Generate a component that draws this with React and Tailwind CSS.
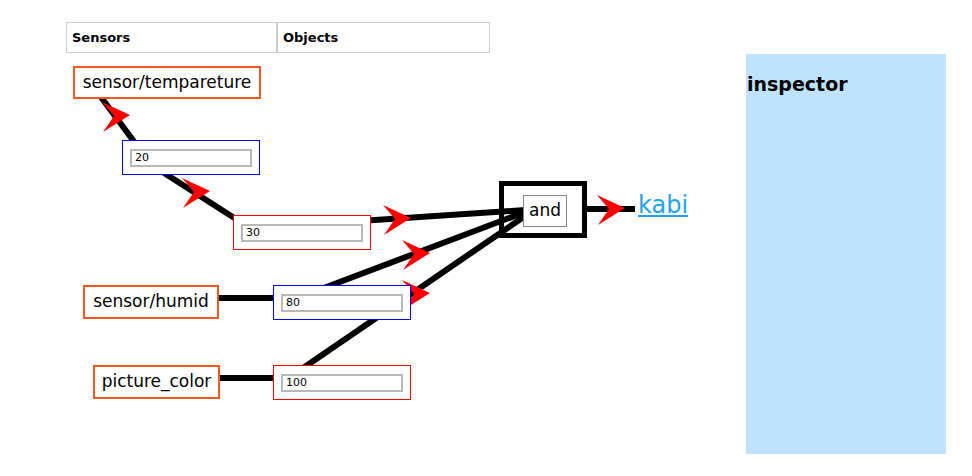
import React from 'react';

const FONT = { fontFamily: '"DejaVu Sans", Verdana, sans-serif' };

// diagram pieces, page coords (canvas starts at y=53)
const lines = [
  [95, 89, 141, 151],
  [150, 164, 250, 228],
  [300, 225, 525, 210],
  [300, 297, 525, 212],
  [290, 377, 525, 216],
  [219, 298, 273, 298],
  [220, 378, 273, 378],
  [587, 209, 635, 209],
];

const arrows = [
  [102, 102],
  [182, 178],
  [383, 205],
  [402, 240],
  [402, 280],
  [597, 195],
];

function SensorNode({ label, className }) {
  return (
    <div className={`absolute flex items-center justify-center bg-white border-2 border-[#f4561e] text-[17px] text-black ${className}`}>
      {label}
    </div>
  );
}

function ValueNode({ value, className }) {
  return (
    <div className={`absolute w-[138px] h-[35px] bg-white border flex items-center px-[7px] ${className}`}>
      <input
        readOnly
        value={value}
        className="w-full h-[18px] border-2 border-[#b8b8b8] px-[3px] text-[11px] text-black outline-none bg-white"
        style={FONT}
      />
    </div>
  );
}

export default function App() {
  return (
    <div className="w-[972px] h-[476px] bg-white flex pt-[22px] overflow-hidden" style={FONT}>
      {/* left: tabs + canvas */}
      <div className="w-[746px] flex flex-col">
        <div className="ml-[66px] w-[424px] h-[31px] grid grid-cols-2 border border-[#cccccc]">
          <div className="flex items-center pl-[5px] text-[13px] font-bold text-black border-r-2 border-[#cccccc]">Sensors</div>
          <div className="flex items-center pl-[5px] text-[13px] font-bold text-black">Objects</div>
        </div>

        <div className="relative h-[400px]">
          <svg className="absolute inset-0" width="746" height="400" viewBox="0 53 746 400">
            {lines.map(([x1, y1, x2, y2], i) => (
              <line key={i} x1={x1} y1={y1} x2={x2} y2={y2} stroke="#000" strokeWidth="6" />
            ))}
            {arrows.map(([x, y], i) => (
              <polygon
                key={i}
                transform={`translate(${x} ${y})`}
                points="0,0 28,13 1,30 12,14"
                fill="#ff0000"
              />
            ))}
          </svg>

          <SensorNode label="sensor/tempareture" className="left-[73px] top-[13px] w-[188px] h-[33px]" />
          <ValueNode value="20" className="left-[122px] top-[87px] border-[#0000ff]" />
          <ValueNode value="30" className="left-[233px] top-[162px] border-[#ff0000]" />

          <SensorNode label="sensor/humid" className="left-[83px] top-[232px] w-[136px] h-[34px]" />
          <ValueNode value="80" className="left-[273px] top-[232px] border-[#0000ff]" />

          <SensorNode label="picture_color" className="left-[93px] top-[312px] w-[127px] h-[34px]" />
          <ValueNode value="100" className="left-[273px] top-[312px] border-[#ff0000]" />

          {/* and gate */}
          <div className="absolute left-[499px] top-[128px] w-[88px] h-[57px] border-[5px] border-black" />
          <div className="absolute left-[523px] top-[142px] w-[44px] h-[32px] bg-white border border-[#888888] flex items-center justify-center text-[17px] text-black">
            and
          </div>

          <a href="#" className="absolute left-[638px] top-[138px] text-[24px] leading-[28px] text-[#1fa3f2] underline">
            kabi
          </a>
        </div>
      </div>

      {/* inspector */}
      <div className="w-[200px] h-[400px] mt-[32px] bg-[#bfe3fd] pt-[18px] pl-[1px]">
        <div className="text-[19px] font-bold text-black leading-[24px]">inspector</div>
      </div>
    </div>
  );
}
